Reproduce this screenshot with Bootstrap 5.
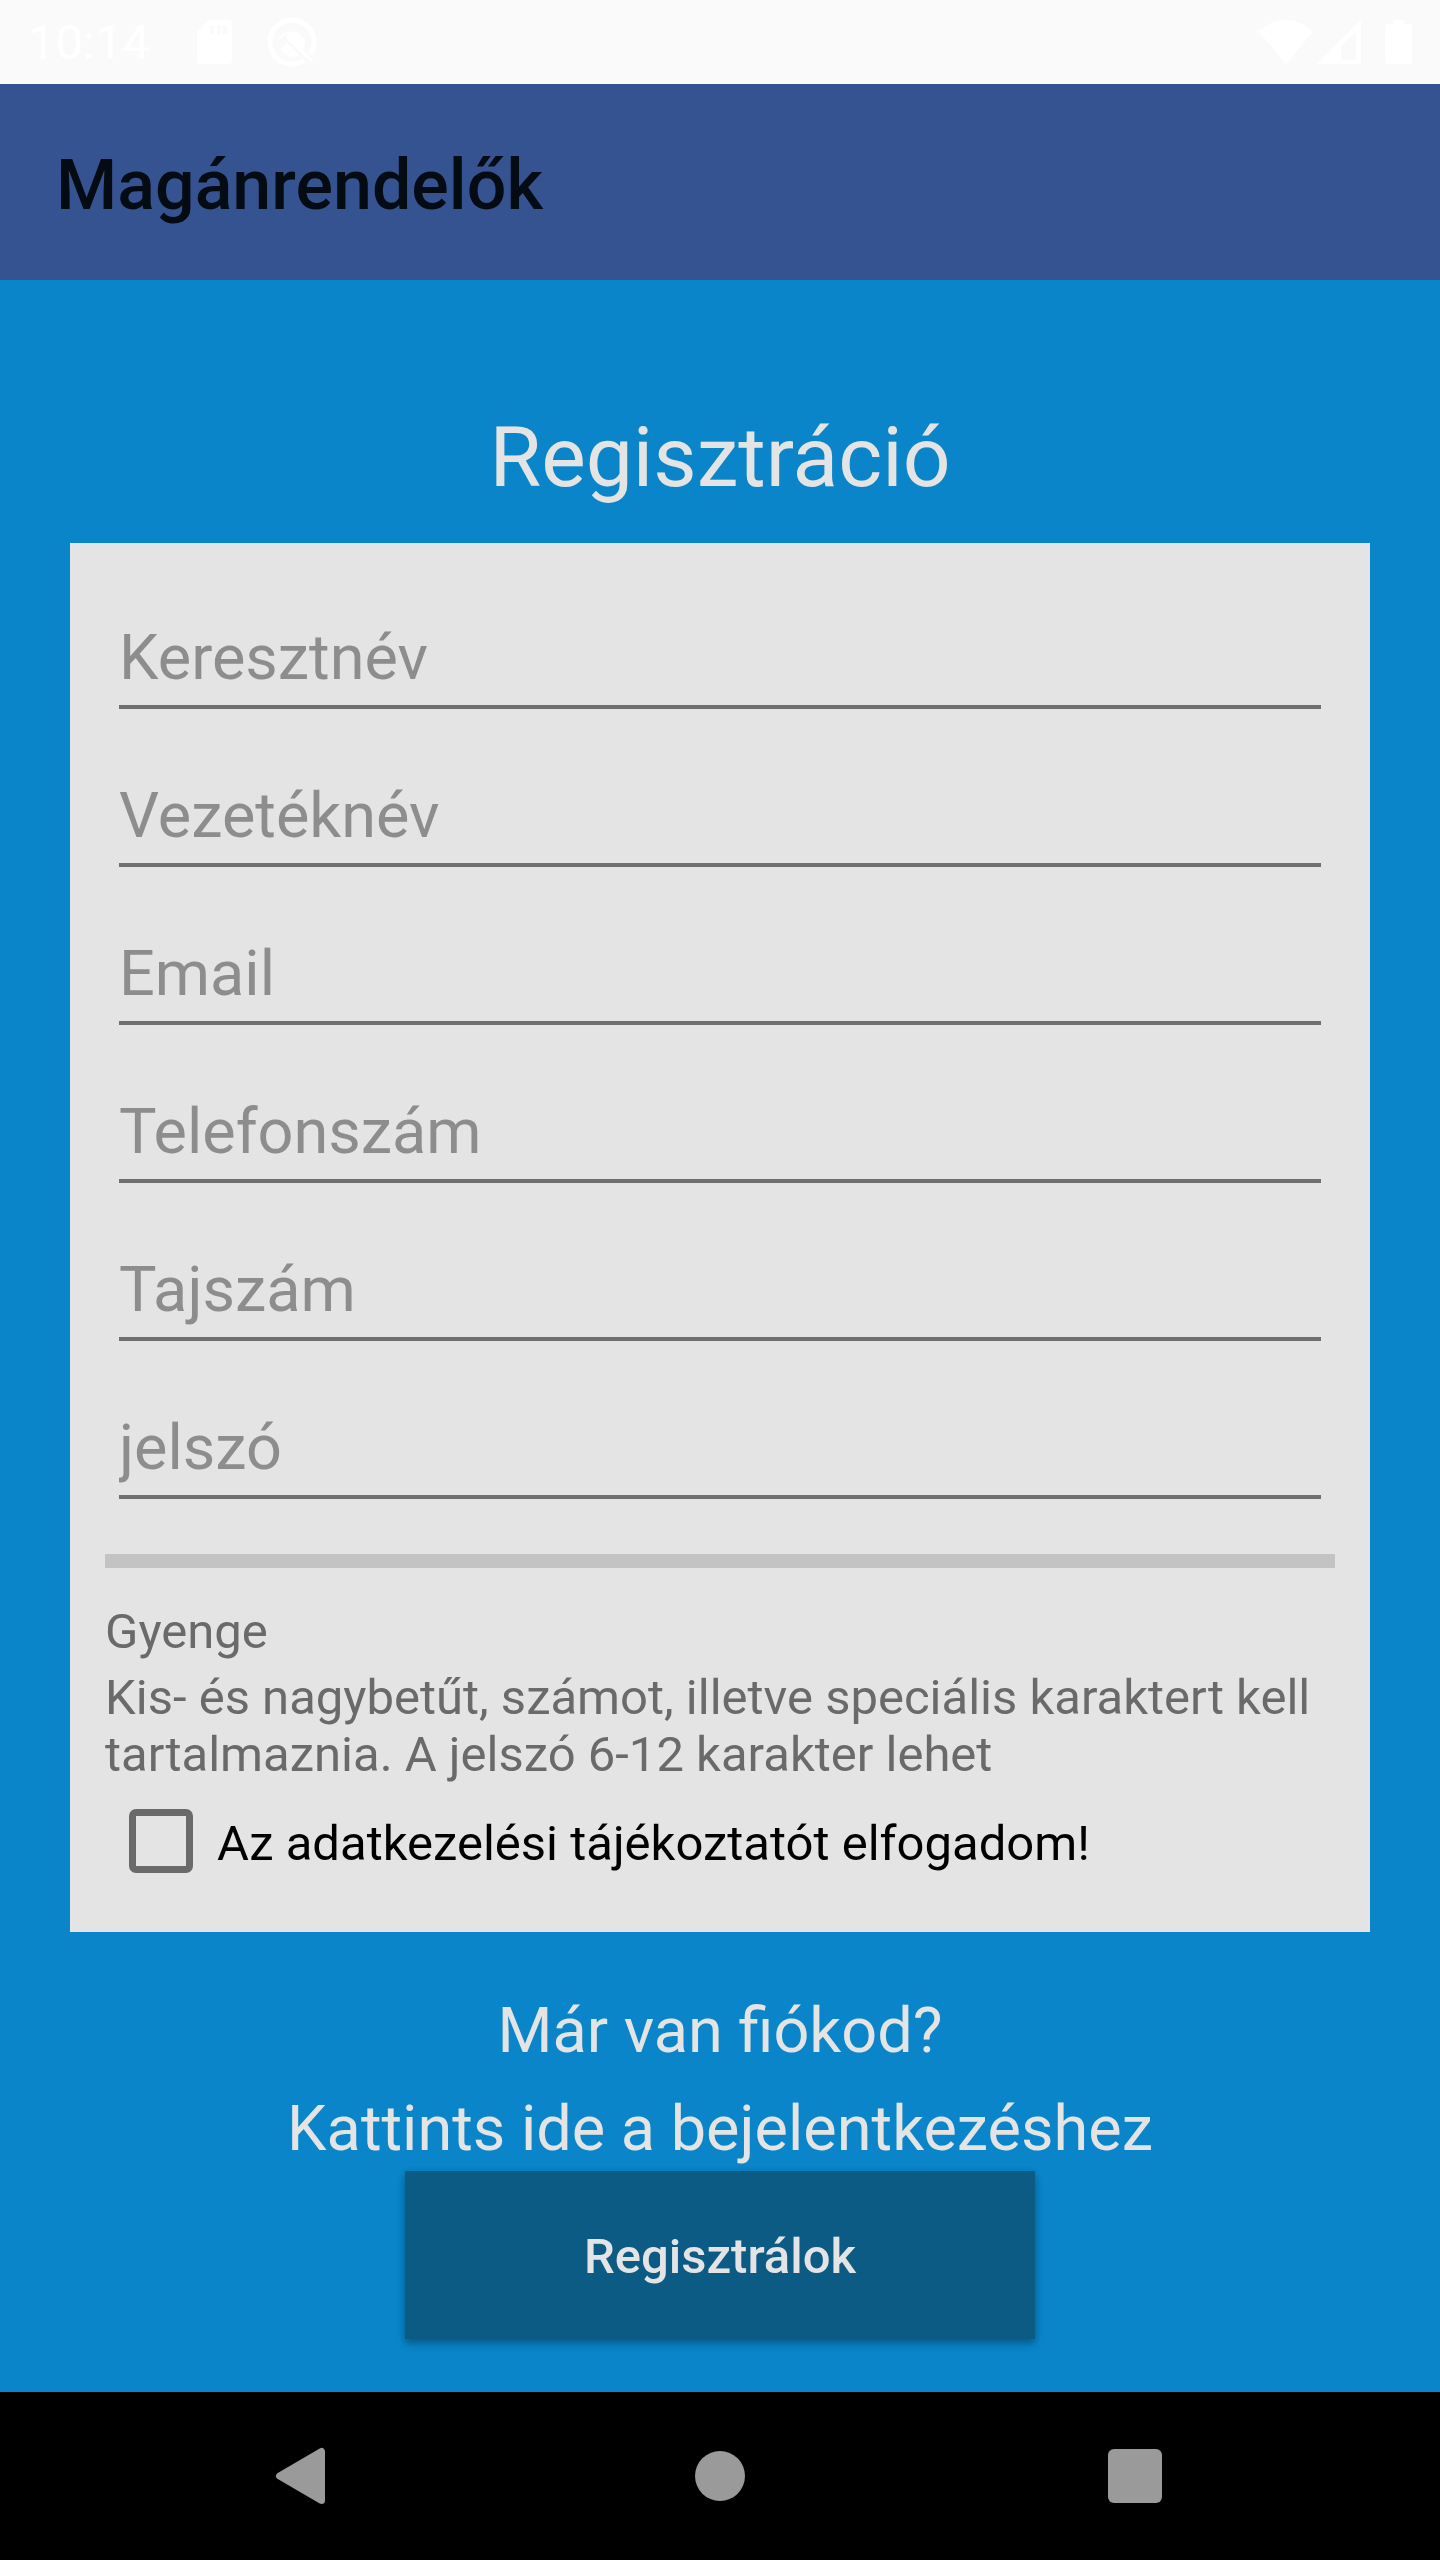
<!DOCTYPE html>
<html lang="hu">
<head>
<meta charset="utf-8">
<meta name="viewport" content="width=device-width, initial-scale=1">
<title>Magánrendelők – Regisztráció</title>
<link href="https://cdn.jsdelivr.net/npm/bootstrap@5.3.0/dist/css/bootstrap.min.css" rel="stylesheet">
<style>
  body { font-family: Roboto, "Noto Sans", sans-serif; font-size: 49px; line-height: 57px; background: #0a85ca; color: #6a6a6a; }
  svg { display: block; fill: currentColor; }

  .status-bar { background: #fafafa; color: #fff; height: 84px; padding: 0 28px; }
  .status-left { gap: 35px; }
  .status-time { margin-right: 12px; }
  .app-bar { background: #365391; padding: 60px 56px 54px; }
  .app-title { color: #050b13; font-size: 70px; line-height: 82px; font-weight: 500; }

  .page-main { padding: 129px 70px 53px; }
  .page-title { color: #e4e4e4; font-size: 84px; line-height: 98px; font-weight: 400; margin-bottom: 36px; }

  .form-panel { background: #e4e4e4; padding: 67px 35px 35px; }
  .fields { gap: 59px; padding: 0 14px; }
  .line-input, .line-input:focus {
    background: transparent; border: 0; border-bottom: 4px solid #6f6f6f; border-radius: 0; box-shadow: none;
    padding: 8px 0 9px; font-size: 63px; line-height: 78px; height: 99px; color: #000;
  }
  .line-input::placeholder { color: #8d8d8d; opacity: 1; }
  .strength { height: 14px; border-radius: 0; background: #c3c3c3; margin: 55px 0 35px; }
  .strength-label { margin-bottom: 9px; }
  .consent { gap: 24px; padding: 26px 0 24px 24px; color: #000; }
  .consent-box { flex: none; width: 64px; height: 64px; margin: 0; border: 7px solid #6a6a6a; background-color: transparent; }
  .consent-box[type=checkbox] { border-radius: 7px; }
  .consent-label { padding-top: 4px; }

  .login-hint { color: #e4e4e4; font-size: 63px; line-height: 74px; gap: 24px; margin: 62px 0 5px; }
  .submit-btn, .submit-btn:hover {
    width: 630px; max-width: 100%; padding: 57px 24px 54px; border: 0; border-radius: 0;
    background: #0b5b85; color: #e4e4e4; font-size: 49px; line-height: 57px; font-weight: 500;
    box-shadow: 0 5px 8px rgba(0, 0, 0, .26), 0 1px 6px rgba(0, 0, 0, .12);
  }

  .nav-keys { background: #000; padding: 0 98px; }
  .nav-key { color: #9a9a9a; background: none; border: 0; padding: 49px 0; }
</style>
</head>
<body class="d-flex flex-column min-vh-100">

<div class="status-bar d-flex align-items-center justify-content-between">
  <div class="status-left d-flex align-items-center">
    <span class="status-time">10:14</span>
    <svg width="35" height="44" viewBox="0 0 35 44" aria-hidden="true"><path fill-rule="evenodd" d="M12 0h19a4 4 0 0 1 4 4v36a4 4 0 0 1-4 4H4a4 4 0 0 1-4-4V12zM13 5v9h4V5zm7 0v9h4V5zm6 0v9h4V5z"/></svg>
    <svg width="50" height="50" viewBox="0 0 50 50" aria-hidden="true"><path d="M37 43.500A22 22 0 1 1 43.500 37" fill="none" stroke="currentColor" stroke-width="5"/><path d="M11 24A14 14 0 0 1 38 25c0 4-1 6-2 8L19 17z"/><path d="M14 32l6-6 12 12c-7 4-14 1-18-6z"/><path d="M20 20l25 24" stroke="currentColor" stroke-width="3"/></svg>
  </div>
  <div class="d-flex align-items-center">
    <svg width="54" height="44" viewBox="0 0 54 44" aria-hidden="true"><path d="M0 11.500Q12 0 27 0t27 11.500L27 44z"/></svg>
    <svg class="ms-1" width="44" height="44" viewBox="0 0 44 44" aria-hidden="true"><path fill-rule="evenodd" d="M44 0v44H0zM39 11L24 26v14h15z"/></svg>
    <svg class="ms-4" width="27" height="44" viewBox="0 0 27 44" aria-hidden="true"><path d="M8 0h11v4h5a3 3 0 0 1 3 3v34a3 3 0 0 1-3 3H3a3 3 0 0 1-3-3V7a3 3 0 0 1 3-3h5z"/></svg>
  </div>
</div>

<header class="app-bar">
  <div class="app-title">Magánrendelők</div>
</header>

<main class="page-main flex-grow-1">
  <form class="d-flex flex-column">
    <h1 class="page-title text-center mt-0">Regisztráció</h1>

    <div class="form-panel">
      <div class="fields d-flex flex-column">
        <div><label class="visually-hidden" for="first">Keresztnév</label><input class="form-control line-input" id="first" type="text" placeholder="Keresztnév"></div>
        <div><label class="visually-hidden" for="last">Vezetéknév</label><input class="form-control line-input" id="last" type="text" placeholder="Vezetéknév"></div>
        <div><label class="visually-hidden" for="email">Email</label><input class="form-control line-input" id="email" type="email" placeholder="Email"></div>
        <div><label class="visually-hidden" for="phone">Telefonszám</label><input class="form-control line-input" id="phone" type="tel" placeholder="Telefonszám"></div>
        <div><label class="visually-hidden" for="taj">Tajszám</label><input class="form-control line-input" id="taj" type="text" placeholder="Tajszám"></div>
        <div><label class="visually-hidden" for="pass">jelszó</label><input class="form-control line-input" id="pass" type="password" placeholder="jelszó"></div>
      </div>

      <div class="progress strength" role="progressbar" aria-labelledby="strength-text" aria-valuenow="0" aria-valuemin="0" aria-valuemax="100">
        <div class="progress-bar" style="width:0%"></div>
      </div>
      <p class="strength-label" id="strength-text">Gyenge</p>
      <p class="mb-0">Kis- és nagybetűt, számot, illetve speciális karaktert kell tartalmaznia. A jelszó 6-12 karakter lehet</p>

      <div class="consent d-flex align-items-center">
        <input class="form-check-input consent-box" type="checkbox" id="consent">
        <label class="consent-label" for="consent">Az adatkezelési tájékoztatót elfogadom!</label>
      </div>
    </div>

    <div class="login-hint d-flex flex-column align-items-center text-center">
      <span>Már van fiókod?</span>
      <a class="text-reset text-decoration-none" href="#">Kattints ide a bejelentkezéshez</a>
    </div>
    <button class="btn submit-btn align-self-center" type="submit">Regisztrálok</button>
  </form>
</main>

<nav class="nav-keys d-flex" aria-label="Rendszer">
  <button class="nav-key col d-flex justify-content-center" type="button" aria-label="Vissza"><svg width="70" height="70" viewBox="0 0 70 70"><path d="M9.500 35L51.500 10.500v49z" stroke="currentColor" stroke-width="7" stroke-linejoin="round"/></svg></button>
  <button class="nav-key col d-flex justify-content-center" type="button" aria-label="Kezdőlap"><svg width="70" height="70" viewBox="0 0 70 70"><circle cx="35" cy="35" r="25"/></svg></button>
  <button class="nav-key col d-flex justify-content-center" type="button" aria-label="Áttekintés"><svg width="70" height="70" viewBox="0 0 70 70"><rect x="8" y="8" width="54" height="54" rx="6"/></svg></button>
</nav>

<script src="https://cdn.jsdelivr.net/npm/bootstrap@5.3.0/dist/js/bootstrap.bundle.min.js"></script>
</body>
</html>
